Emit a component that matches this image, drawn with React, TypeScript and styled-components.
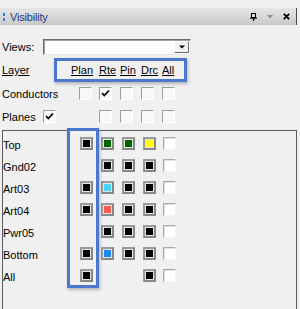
import React from "react";
import styled, { createGlobalStyle } from "styled-components";

const Global = createGlobalStyle`
  html, body { margin: 0; padding: 0; background: #f0f0f0; overflow: hidden; }
  body { font-family: "Liberation Sans", Arial, sans-serif; font-size: 11px; color: #000; }
`;

const Dock = styled.div`
  width: 297px;
  padding-top: 8px;
  box-sizing: border-box;
  display: flex;
  flex-direction: column;
  & > * { flex: none; }
`;

const TitleBar = styled.div`
  height: 17px;
  display: flex;
  align-items: center;
  background: linear-gradient(#e6e6e6, #c9c9c9);
  border-right: 1px solid #4a4a4a;
  padding: 0 6px 0 3px;
`;

const Grip = styled.div`
  width: 2px;
  display: flex;
  flex-direction: column;
  gap: 2px;
  margin-right: 5px;
  span { display: block; width: 2px; height: 3px; background: #2f7fe0; }
`;

const Title = styled.span`
  color: #1e3a84;
  font-size: 11px;
  letter-spacing: -0.2px;
`;

const TitleTools = styled.div`
  margin-left: auto;
  display: flex;
  align-items: center;
  gap: 10px;
  svg { display: block; }
`;

const ViewsRow = styled.div`
  display: flex;
  align-items: center;
  margin-top: 14px;
  padding-left: 2px;
  height: 16px;
`;

const Label = styled.span<{ $w?: number }>`
  width: ${(p) => (p.$w ? `${p.$w}px` : "auto")};
  flex: none;
  white-space: nowrap;
`;

const Combo = styled.div`
  width: 148px;
  height: 16px;
  box-sizing: border-box;
  background: #fff;
  border: 1px solid;
  border-color: #6a6a6a #e6e6e6 #e6e6e6 #6a6a6a;
  box-shadow: inset 1px 1px 0 #a0a0a0;
  display: flex;
  justify-content: flex-end;
  padding: 1px;
`;

const ComboButton = styled.div`
  width: 15px;
  background: #f0f0f0;
  border: 1px solid;
  border-color: #fff #6a6a6a #6a6a6a #fff;
  box-sizing: border-box;
  display: flex;
  align-items: center;
  justify-content: center;
`;

const LayerRow = styled.div`
  display: flex;
  align-items: center;
  margin-top: 3px;
  padding-left: 2px;
`;

const Underlined = styled.span`
  text-decoration: underline;
`;

const HeaderBox = styled.div`
  width: 133px;
  height: 24px;
  box-sizing: border-box;
  border: 3px solid #4b78cc;
  box-shadow: 1px 2px 3px rgba(0, 0, 0, 0.25);
  display: flex;
  align-items: center;
  padding-left: 14px;
`;

const HeaderCell = styled.span<{ $w: number }>`
  width: ${(p) => p.$w}px;
  flex: none;
  text-decoration: underline;
`;

const CheckRow = styled.div<{ $mt: number }>`
  display: grid;
  grid-template-columns: 77px 20px 21px 21px 21px 13px;
  align-items: center;
  margin-top: ${(p) => p.$mt}px;
  padding-left: 2px;
  height: 13px;
`;

const LabelCell = styled.div`
  display: flex;
  align-items: center;
`;

const Box = styled.div`
  width: 13px;
  height: 13px;
  box-sizing: border-box;
  background: #f8f8f8;
  border: 1px solid;
  border-color: #9c9c9c #ffffff #ffffff #9c9c9c;
  display: flex;
  align-items: center;
  justify-content: center;
`;

const Panel = styled.div`
  position: relative;
  margin: 7px 0 0 2px;
  height: 185px;
  border: 1px solid #5c5c5c;
  padding-top: 1px;
`;

const LayerLine = styled.div`
  display: grid;
  grid-template-columns: 77px 21px 21px 21px 20px 13px;
  align-items: center;
  height: 22px;
`;

const LayerName = styled.span`
  padding-top: 3px;
`;

const Swatch = styled.div`
  width: 13px;
  height: 13px;
  box-sizing: border-box;
  border: 2px solid #878787;
  border-top-color: #9a9a9a;
  border-left-color: #9a9a9a;
  background: #e6e6e6;
  padding: 1px;
`;

const Fill = styled.div<{ $c: string }>`
  width: 100%;
  height: 100%;
  background: ${(p) => p.$c};
`;

const WhiteBox = styled.div`
  width: 13px;
  height: 13px;
  box-sizing: border-box;
  background: #fff;
  border: 1px solid;
  border-color: #a8a8a8 #f4f4f4 #f4f4f4 #a8a8a8;
  box-shadow: inset 1px 1px 0 #e0e0e0;
`;

const Highlight = styled.div`
  position: absolute;
  left: 64px;
  top: -3px;
  width: 32px;
  height: 160px;
  box-sizing: border-box;
  border: 3px solid #4b78cc;
  box-shadow: 1px 2px 3px rgba(0, 0, 0, 0.25);
  pointer-events: none;
`;

const Check = () => (
  <svg width="9" height="9" viewBox="0 0 9 9">
    <path d="M1 4 L3.3 6.5 L8 1.5" fill="none" stroke="#000" strokeWidth="1.8" />
  </svg>
);

type Cell = string | null;
const layers: { name: string; cells: Cell[] }[] = [
  { name: "Top", cells: ["#000", "#006400", "#006400", "#ffff00"] },
  { name: "Gnd02", cells: [null, "#000", "#000", "#000"] },
  { name: "Art03", cells: ["#000", "#4cd4f8", "#000", "#000"] },
  { name: "Art04", cells: ["#000", "#ff5a50", "#000", "#000"] },
  { name: "Pwr05", cells: [null, "#000", "#000", "#000"] },
  { name: "Bottom", cells: ["#000", "#1a86f2", "#000", "#000"] },
  { name: "All", cells: ["#000", null, null, "#000"] },
];

export default function App() {
  return (
    <>
      <Global />
      <Dock>
        <TitleBar>
          <Grip>
            <span />
            <span />
          </Grip>
          <Title>Visibility</Title>
          <TitleTools>
            <svg width="7" height="8" viewBox="0 0 7 8">
              <rect x="1.5" y="0.5" width="4" height="4" fill="none" stroke="#000" />
              <rect x="0" y="4.5" width="7" height="1.2" fill="#000" />
              <rect x="3" y="5" width="1.2" height="3" fill="#000" />
            </svg>
            <svg width="6" height="4" viewBox="0 0 6 4">
              <polygon points="0,0 6,0 3,3.5" fill="#8a8a8a" />
            </svg>
            <svg width="7" height="7" viewBox="0 0 7 7">
              <path d="M0.8 0.8 L6.2 6.2 M6.2 0.8 L0.8 6.2" stroke="#000" strokeWidth="1.8" />
            </svg>
          </TitleTools>
        </TitleBar>

        <ViewsRow>
          <Label $w={41}>Views:</Label>
          <Combo>
            <ComboButton>
              <svg width="6" height="4" viewBox="0 0 6 4">
                <polygon points="0,0.5 6,0.5 3,3.5" fill="#000" />
              </svg>
            </ComboButton>
          </Combo>
        </ViewsRow>

        <LayerRow>
          <Label $w={52}>
            <Underlined>Layer</Underlined>
          </Label>
          <HeaderBox>
            <HeaderCell $w={28}>Plan</HeaderCell>
            <HeaderCell $w={21}>Rte</HeaderCell>
            <HeaderCell $w={21}>Pin</HeaderCell>
            <HeaderCell $w={21}>Drc</HeaderCell>
            <HeaderCell $w={14}>All</HeaderCell>
          </HeaderBox>
        </LayerRow>

        <CheckRow $mt={5}>
          <LabelCell>Conductors</LabelCell>
          <Box />
          <Box>
            <Check />
          </Box>
          <Box />
          <Box />
          <Box />
        </CheckRow>

        <CheckRow $mt={10}>
          <LabelCell>
            <Label $w={41}>Planes</Label>
            <Box>
              <Check />
            </Box>
          </LabelCell>
          <span />
          <Box />
          <Box />
          <Box />
          <Box />
        </CheckRow>

        <Panel>
          {layers.map((l) => (
            <LayerLine key={l.name}>
              <LayerName>{l.name}</LayerName>
              {l.cells.map((c, i) =>
                c ? (
                  <Swatch key={i}>
                    <Fill $c={c} />
                  </Swatch>
                ) : (
                  <span key={i} />
                )
              )}
              <WhiteBox />
            </LayerLine>
          ))}
          <Highlight />
        </Panel>
      </Dock>
    </>
  );
}
